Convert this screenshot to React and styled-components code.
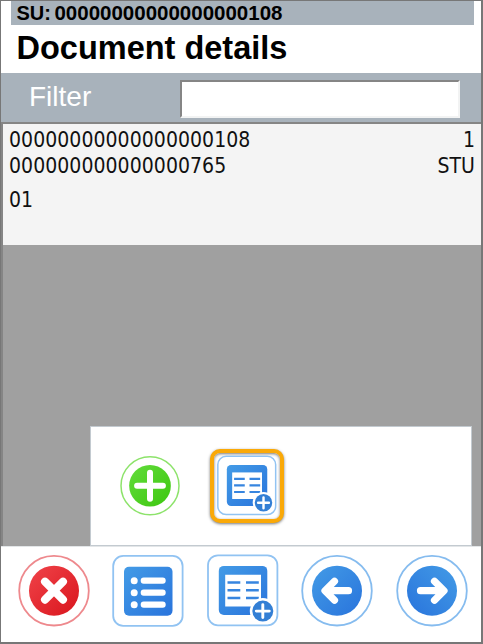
import React from "react";
import styled, { createGlobalStyle } from "styled-components";

const GlobalStyle = createGlobalStyle`
  *, *::before, *::after { box-sizing: border-box; }
  body { margin: 0; background: #fff; overflow: hidden; }
`;

const Screen = styled.main`
  width: 483px;
  height: 644px;
  display: flex;
  flex-direction: column;
  border: 1px solid #777;
  border-right-width: 2px;
  border-bottom-width: 2px;
  background: #fff;
  color: #000;
  font-family: "Liberation Sans", Arial, sans-serif;
`;

const UnitBar = styled.header`
  flex: none;
  display: flex;
  gap: 3.5px;
  height: 24px;
  margin: 0 7px 0 10px;
  padding-left: 5.5px;
  background: #a8b2bb;
  font-size: 20.5px;
  font-weight: 700;
  line-height: 24px;
`;

const UnitLabel = styled.span`
  font-size: 20px;
`;

const Title = styled.h1`
  flex: none;
  height: 48px;
  margin: 0;
  padding-left: 15.5px;
  font-size: 32.5px;
  line-height: 47px;
  font-weight: 700;
  white-space: nowrap;
`;

const FilterBar = styled.label`
  flex: none;
  display: flex;
  height: 49px;
  padding: 7px 0 0 28px;
  background: #a8b2bb;
  color: #fff;
  font-size: 28px;
  line-height: 34px;
`;

const FilterText = styled.span`
  width: 151px;
`;

const FilterInput = styled.input`
  width: 280px;
  height: 38px;
  padding: 2px 6px;
  border: 2px solid #f2f3f3;
  border-top-color: #858585;
  border-left-color: #858585;
  border-radius: 0;
  outline: none;
  background: #fff;
  font: inherit;
`;

const List = styled.section`
  flex: none;
  position: relative;
  height: 424px;
  border-top: 2px solid #858585;
  border-left: 2px solid #858585;
  background: #a0a0a0;
`;

const Item = styled.article`
  height: 121px;
  padding: 3px 6px 0 6px;
  background: #f4f4f4;
  color: #111;
  font-family: "DejaVu Sans Condensed", "DejaVu Sans", sans-serif;
  font-stretch: condensed;
  font-size: 21px;
  letter-spacing: 0.05px;
  line-height: 26px;
`;

const ItemLine = styled.div`
  display: flex;
  justify-content: space-between;
  margin-top: ${({ $gap = 0 }) => $gap}px;
`;

const Popup = styled.div`
  position: absolute;
  right: 9px;
  bottom: 0;
  width: 382px;
  height: 120px;
  padding: 0 0 1px 29px;
  display: flex;
  align-items: center;
  gap: 30px;
  border: 1px solid #c3cad0;
  background: #fff;
`;

const Toolbar = styled.nav`
  flex: 1;
  display: flex;
  justify-content: space-between;
  align-items: flex-start;
  padding: 8px 13.5px 0 16.5px;
  border-top: 1px solid #e3e6e8;
`;

const IconButton = styled.button`
  display: block;
  padding: 0;
  border: 0;
  background: none;
  line-height: 0;
`;

const Highlight = styled.div`
  width: 74px;
  height: 74px;
  display: flex;
  align-items: center;
  justify-content: center;
  border: 4px solid #faa908;
  border-radius: 10px;
  background: #fff;
  box-shadow: 0 1px 3px #0008, inset 0 1px 3px #0008;
`;

const Gradient = ({ id, from, to, flip }) => (
  <defs>
    <linearGradient id={id} x1={flip ? 1 : 0} y1="0" x2={flip ? 0 : 1} y2="1">
      <stop offset="0" stopColor={from} />
      <stop offset="1" stopColor={to} />
    </linearGradient>
  </defs>
);

function RoundIcon({ id, from, to, ring, size = 72, flip, children }) {
  return (
    <svg width={size} height={size} viewBox="0 0.3 72 72" fill="none">
      <Gradient id={id} from={from} to={to} flip={flip} />
      <circle cx="36" cy="36" r="34.8" fill="#fff" stroke={ring} strokeWidth="1.8" />
      <circle cx="36" cy="36" r="25" fill={`url(#${id})`} />
      <g stroke="#fff" strokeWidth="7.2" strokeLinecap="round" strokeLinejoin="round">
        {children}
      </g>
    </svg>
  );
}

function ListIcon() {
  return (
    <svg width="72" height="72" viewBox="0 0.3 72 72" fill="none">
      <Gradient id="list" from="#439be6" to="#2974dc" />
      <rect x="1.2" y="1.2" width="69.4" height="70" rx="10" stroke="#91c3f2" strokeWidth="1.8" />
      <rect x="12" y="12" width="48.5" height="49" rx="5" fill="url(#list)" />
      <g fill="#fff">
        {[26, 38, 50].map((y) => (
          <g key={y}>
            <circle cx="22.2" cy={y} r="3.5" />
            <rect x="28.7" y={y - 3.1} width="25" height="6.2" rx="3" />
          </g>
        ))}
      </g>
    </svg>
  );
}

function TableAddIcon({ id, size = 72 }) {
  return (
    <svg width={size} height={size} viewBox="0 0.6 72 72" overflow="visible" fill="none">
      <Gradient id={id} from="#439be6" to="#2974dc" />
      <rect x="1" y="0.9" width="69.4" height="70" rx="10" stroke="#91c3f2" strokeWidth="1.8" />
      <rect x="11.8" y="11.5" width="48.5" height="49" rx="5" fill={`url(#${id})`} />
      <path d="M18.2 20.3h35.8v31.9H18.2z" fill="#fff" />
      <path
        d="M20.500 28h12.800M39 28h12.800M20.500 35.800h12.800M39 35.800h12.800M20.500 43.700h12.800M39 43.700h12.800"
        stroke="#3785df"
        strokeWidth="2.5"
      />
      <circle cx="55.8" cy="56.7" r="13" fill="#fff" />
      <circle cx="55.8" cy="56.7" r="10.5" fill="#337fd5" />
      <path d="M49.300 56.700h13M55.800 50.200v13" stroke="#fff" strokeWidth="2.9" strokeLinecap="round" />
    </svg>
  );
}

export default function App() {
  return (
    <>
      <GlobalStyle />
      <Screen>
        <UnitBar>
          <UnitLabel>SU:</UnitLabel>
          <span>00000000000000000108</span>
        </UnitBar>
        <Title>Document details</Title>
        <FilterBar>
          <FilterText>Filter</FilterText>
          <FilterInput type="text" />
        </FilterBar>
        <List>
          <Item>
            <ItemLine>
              <span>00000000000000000108</span>
              <span>1</span>
            </ItemLine>
            <ItemLine>
              <span>000000000000000765</span>
              <span>STU</span>
            </ItemLine>
            <ItemLine $gap={8}>
              <span>01</span>
            </ItemLine>
          </Item>
          <Popup>
            <IconButton aria-label="Add">
              <RoundIcon id="add" from="#63dc3c" to="#3dc70f" ring="#8de36b" size={60}>
                <path d="M36 20.500v31M20.500 36h31" />
              </RoundIcon>
            </IconButton>
            <Highlight>
              <IconButton aria-label="Add to table">
                <TableAddIcon id="popup-table" size={60} />
              </IconButton>
            </Highlight>
          </Popup>
        </List>
        <Toolbar>
          <IconButton aria-label="Cancel">
            <RoundIcon id="cancel" from="#f04349" to="#d9151d" ring="#ee898d">
              <path d="M27 27l18 18M45 27l-18 18" strokeWidth="8" />
            </RoundIcon>
          </IconButton>
          <IconButton aria-label="List">
            <ListIcon />
          </IconButton>
          <IconButton aria-label="Add table">
            <TableAddIcon id="table" />
          </IconButton>
          <IconButton aria-label="Previous">
            <RoundIcon id="previous" from="#439be6" to="#2974dc" ring="#86bcef">
              <path d="M33.500 26.500L24 36l9.500 9.500M25 36h22.500" />
            </RoundIcon>
          </IconButton>
          <IconButton aria-label="Next">
            <RoundIcon id="next" from="#439be6" to="#2974dc" ring="#86bcef" flip>
              <path d="M38.500 26.500L48 36l-9.500 9.500M47 36H24.500" />
            </RoundIcon>
          </IconButton>
        </Toolbar>
      </Screen>
    </>
  );
}
